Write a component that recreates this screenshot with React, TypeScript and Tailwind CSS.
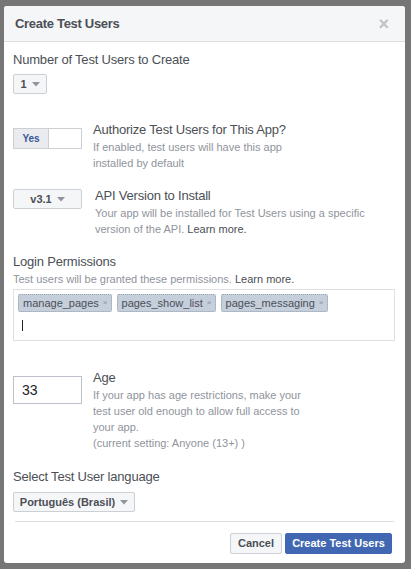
import React from 'react'

const Caret = () => (
  <svg width="8" height="5" viewBox="0 0 8 5" className="ml-[5px] mt-[1px]">
    <path d="M0 0h8L4 4.5z" fill="#90949c" />
  </svg>
)

function Dropdown({ label, className }: { label: string; className: string }) {
  return (
    <div
      className={`flex items-center justify-center border border-[#ccd0d5] bg-[#f5f6f7] rounded-[2px] text-[11px] font-bold text-[#4b4f56] ${className}`}
    >
      {label}
      <Caret />
    </div>
  )
}

function Tag({ name }: { name: string }) {
  return (
    <div className="flex items-center h-[18px] pl-[4px] pr-[3px] bg-[#c5cedb] border border-dotted border-[#98a2b0] rounded-[2px] text-[11px] text-[#4b4f56]">
      {name}
      <span className="ml-[4px] text-[8px] text-[#90949c]">×</span>
    </div>
  )
}

export default function App() {
  return (
    <div className="h-[569px] w-[411px] bg-[#767676] pt-[6px] pl-[4px] font-['Liberation_Sans',Arial,sans-serif]">
      <div className="w-[401px] h-[557px] bg-white rounded-[3px] flex flex-col overflow-hidden">
        <div className="h-[36px] shrink-0 bg-[#f5f6f7] border-b border-[#dddfe2] flex items-center justify-between pl-[11px] pr-[16px]">
          <span className="text-[13px] tracking-[-0.3px] font-bold text-[#4b4f56]">Create Test Users</span>
          <span className="text-[18px] font-bold text-[#bec2c9] leading-none">×</span>
        </div>

        <div className="flex flex-col px-[9px] pt-[9px]">
          <div className="text-[13px] tracking-[-0.2px] leading-[18px] text-[#4b4f56]">Number of Test Users to Create</div>
          <Dropdown label="1" className="mt-[5px] w-[34px] h-[20px]" />

          <div className="flex mt-[27px]">
            <div className="mt-[7px] w-[69px] h-[21px] border border-[#ccd0d5] flex shrink-0">
              <div className="w-[35px] bg-[#e9ebee] border-r border-[#ccd0d5] flex items-center justify-center text-[10px] font-bold text-[#365899]">
                Yes
              </div>
            </div>
            <div className="ml-[11px]">
              <div className="text-[13px] tracking-[-0.2px] leading-[18px] text-[#4b4f56]">Authorize Test Users for This App?</div>
              <div className="text-[11px] leading-[16px] text-[#90949c] w-[200px]">
                If enabled, test users will have this app installed by default
              </div>
            </div>
          </div>

          <div className="flex mt-[16px]">
            <Dropdown label="v3.1" className="mt-[2px] w-[69px] h-[20px] shrink-0" />
            <div className="ml-[13px]">
              <div className="text-[13px] tracking-[-0.2px] leading-[18px] text-[#4b4f56]">API Version to Install</div>
              <div className="text-[11px] leading-[16px] text-[#90949c] w-[275px]">
                Your app will be installed for Test Users using a specific version of the API.{' '}
                <span className="text-[#4b4f56]">Learn more.</span>
              </div>
            </div>
          </div>

          <div className="mt-[16px] text-[13px] tracking-[-0.2px] leading-[18px] text-[#4b4f56]">Login Permissions</div>
          <div className="text-[11px] leading-[16px] text-[#90949c]">
            Test users will be granted these permissions. <span className="text-[#4b4f56]">Learn more.</span>
          </div>
          <div className="mt-[2px] w-[382px] h-[52px] border border-[#dddfe2] px-[4px] pt-[4px]">
            <div className="flex gap-[5px]">
              <Tag name="manage_pages" />
              <Tag name="pages_show_list" />
              <Tag name="pages_messaging" />
            </div>
            <div className="ml-[4px] mt-[8px] w-[1px] h-[11px] bg-[#1d2129]" />
          </div>

          <div className="flex mt-[28px]">
            <div className="mt-[7px] w-[69px] h-[28px] border border-[#bdc1c9] flex items-center pl-[8px] text-[14px] text-[#1d2129] shrink-0">
              33
            </div>
            <div className="ml-[11px]">
              <div className="text-[13px] tracking-[-0.2px] leading-[18px] text-[#4b4f56]">Age</div>
              <div className="text-[11px] leading-[16px] text-[#90949c] w-[215px]">
                If your app has age restrictions, make your test user old enough to allow full access to your app.
                <br />
                (current setting: Anyone (13+) )
              </div>
            </div>
          </div>

          <div className="mt-[17px] text-[13px] tracking-[-0.2px] leading-[18px] text-[#4b4f56]">Select Test User language</div>
          <Dropdown label="Português (Brasil)" className="mt-[6px] w-[122px] h-[20px]" />

          <div className="mt-[9px] mx-[2px] border-t border-[#dddfe2]" />

          <div className="flex justify-end gap-[3px] mt-[11px] pr-[4px]">
            <div className="h-[21px] w-[52px] border border-[#ccd0d5] bg-[#f5f6f7] rounded-[2px] flex items-center justify-center text-[11px] font-bold text-[#4b4f56]">
              Cancel
            </div>
            <div className="h-[21px] w-[107px] border border-[#4267b2] bg-[#4267b2] rounded-[2px] flex items-center justify-center text-[11px] font-bold text-white">
              Create Test Users
            </div>
          </div>
        </div>
      </div>
    </div>
  )
}
